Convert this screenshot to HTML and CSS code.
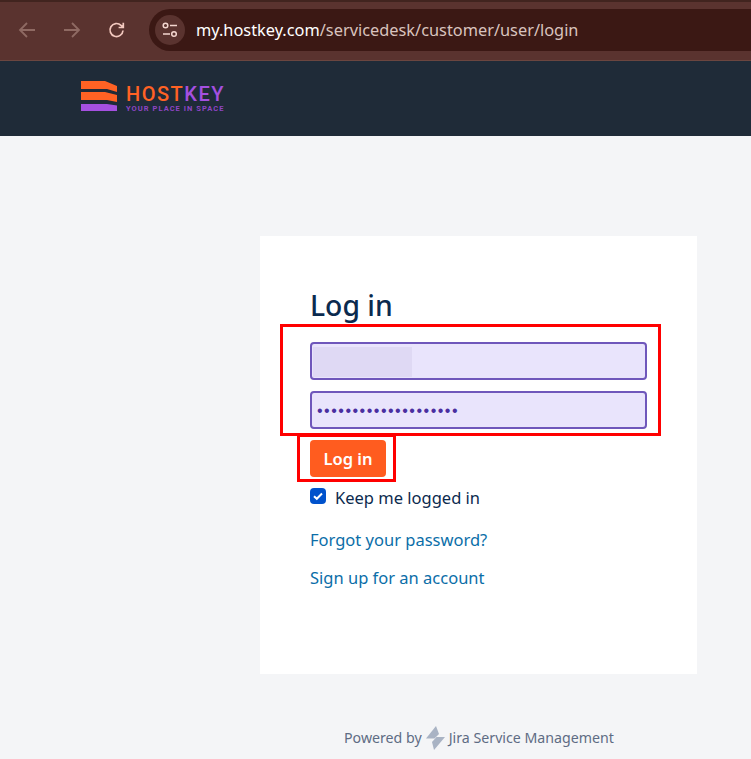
FILE: index.html
```html
<!DOCTYPE html>
<html lang="en">
<head>
<meta charset="utf-8">
<title>Log in</title>
<link rel="stylesheet" href="styles.css">
</head>
<body>
<div class="chrome">
  <div class="nav-icon">
    <svg width="20" height="20" viewBox="0 0 20 20"><path d="M18 10H3M10 3L3 10l7 7" fill="none" stroke="#8f6a63" stroke-width="1.8"/></svg>
  </div>
  <div class="nav-icon">
    <svg width="20" height="20" viewBox="0 0 20 20"><path d="M2 10h15M10 3l7 7-7 7" fill="none" stroke="#8f6a63" stroke-width="1.8"/></svg>
  </div>
  <div class="nav-icon reload">
    <svg width="20" height="20" viewBox="0 0 20 20"><path d="M16 10.500a6.500 6.500 0 1 1-2-5.200L16 7.200M16.300 2.800v4.700h-4.700" fill="none" stroke="#f3c9bf" stroke-width="1.700"/></svg>
  </div>
  <div class="omnibox">
    <div class="tune">
      <svg width="18" height="18" viewBox="0 0 18 18"><circle cx="4.500" cy="4.500" r="2.300" fill="none" stroke="#f3d6cf" stroke-width="1.500"/><path d="M9 4.500h7M2 13h7" stroke="#f3d6cf" stroke-width="1.600"/><circle cx="13" cy="13" r="2.300" fill="none" stroke="#f3d6cf" stroke-width="1.500"/></svg>
    </div>
    <div class="url"><span class="url-host">my.hostkey.com</span>/servicedesk/customer/user/login</div>
  </div>
</div>
<header class="site-header">
  <svg class="logo-mark" width="37" height="30" viewBox="0 0 37 30">
    <path d="M0 0H24L36 5V11L26 8H0Z" fill="#ff6224"/>
    <path d="M0 11H24L36 14V21L26 19H0Z" fill="#ff6224"/>
    <path d="M0 23H26L36 24.500V30H0Z" fill="#a550e0"/>
  </svg>
  <div class="logo-text">
    <div class="logo-name"><span class="logo-host">HOST</span><span class="logo-key">KEY</span></div>
    <div class="logo-tag">YOUR PLACE IN SPACE</div>
  </div>
</header>
<main class="page">
  <section class="card">
    <h1 class="title">Log in</h1>
    <div class="field"><div class="blur"></div></div>
    <div class="field field-pass"><span class="dots">••••••••••••••••••••</span></div>
    <button class="submit">Log in</button>
    <label class="keep">
      <span class="check">
        <svg width="12" height="12" viewBox="0 0 12 12"><path d="M2 6.200l2.800 2.600L10 3.500" fill="none" stroke="#fff" stroke-width="2"/></svg>
      </span>
      <span class="keep-label">Keep me logged in</span>
    </label>
    <a class="link link-first">Forgot your password?</a>
    <a class="link link-second">Sign up for an account</a>
  </section>
  <footer class="powered">
    <span class="powered-text">Powered by</span>
    <svg width="19" height="24" viewBox="0 0 19 24"><path d="M10 0L0 12.500H8.500L13 8Z" fill="#a9b3c4"/><path d="M19 11H10.500L6 16L8 24Z" fill="#a9b3c4"/></svg>
    <span class="powered-text">Jira Service Management</span>
  </footer>
  <div class="mark mark-fields"></div>
  <div class="mark mark-button"></div>
</main>
</body>
</html>
```
FILE: styles.css
```css
* { box-sizing: border-box; }
html, body { margin: 0; height: 100%; overflow: hidden; }
body { background: #f4f5f7; font-family: "Noto Sans", sans-serif; width: 751px; height: 759px; }

.chrome {
  height: 61px;
  background: #5a332f;
  border-top: 2px solid #41241f;
  border-bottom: 1px solid #6b4640;
  display: flex;
  align-items: center;
  padding: 0 0 2px 17px;
}
.nav-icon { width: 20px; height: 20px; margin-right: 25px; display: flex; }
.nav-icon.reload { margin-right: 22px; }
.omnibox {
  flex: 1;
  height: 42px;
  background: #3b1814;
  border-radius: 21px 0 0 21px;
  display: flex;
  align-items: center;
  padding-left: 6px;
}
.tune {
  width: 30px;
  height: 30px;
  border-radius: 50%;
  background: #5a332f;
  display: flex;
  align-items: center;
  justify-content: center;
}
.url {
  margin-left: 11px;
  font-size: 16.350px;
  color: #d9c3be;
  white-space: nowrap;
}
.url-host { color: #ffffff; }

.site-header {
  height: 75px;
  background: #1f2b38;
  display: flex;
  align-items: flex-start;
  padding: 20px 0 0 81px;
}
.logo-text { margin-left: 8px; padding-top: 3px; font-family: Roboto, sans-serif; }
.logo-name { font-size: 20px; line-height: 20px; font-weight: 500; letter-spacing: 1.500px; white-space: nowrap; }
.logo-host { color: #ff6224; }
.logo-key { color: #a550e0; }
.logo-tag { font-size: 7.500px; line-height: 8px; font-weight: 700; color: #8e45c4; letter-spacing: 1.050px; white-space: nowrap; margin-top: 1px; }

.page { position: relative; height: 623px; padding: 100px 0 0 260px; }
.card {
  width: 437px;
  height: 438px;
  background: #fff;
  padding: 49px 50px 0;
}
.title {
  margin: 0;
  font-size: 28.300px;
  line-height: 40px;
  font-weight: 500;
  color: #0b2a4e;
}
.field {
  width: 337px;
  height: 38px;
  margin-top: 17px;
  background: #e9e4fc;
  border: 2px solid #6f57bb;
  border-radius: 4px;
  padding: 3px 1px;
}
.field-pass { margin-top: 11px; display: flex; align-items: center; padding: 0 0 0 5px; }
.blur { width: 99px; height: 30px; background: #dfd9f4; }
.dots { font-family: "Liberation Sans", sans-serif; font-size: 16px; letter-spacing: 1.500px; color: #4a2ea0; line-height: 1; padding-top: 2px; }
.submit {
  display: block;
  width: 76px;
  height: 37px;
  margin-top: 11px;
  padding: 0;
  border: 0;
  border-radius: 4px;
  background: #ff5c1f;
  color: #fff;
  font: 600 16.500px "Noto Sans", sans-serif;
}
.keep {
  display: flex;
  align-items: center;
  margin-top: 9px;
  height: 24px;
  font-size: 16.500px;
  color: #0b2a4e;
  gap: 9px;
}
.keep-label { margin-bottom: 2px; }
.check {
  width: 16px;
  height: 16px;
  border-radius: 4px;
  background: #0052cc;
  display: flex;
  align-items: center;
  justify-content: center;
  margin-top: -4px;
}
.link { display: block; font-size: 16.500px; line-height: 24px; color: #0b6ea8; }
.link-first { margin-top: 18px; }
.link-second { margin-top: 14px; }

.powered {
  display: flex;
  align-items: center;
  gap: 4px;
  margin: 52px 0 0 84px;
  height: 24px;
  font-size: 14.200px;
  color: #5e6c84;
}
.powered-text { margin-bottom: 2px; }
.mark { position: absolute; border: 3px solid #ff0000; }
.mark-fields { left: 280px; top: 188px; width: 381px; height: 112px; }
.mark-button { left: 297px; top: 298px; width: 99px; height: 48px; }
```
